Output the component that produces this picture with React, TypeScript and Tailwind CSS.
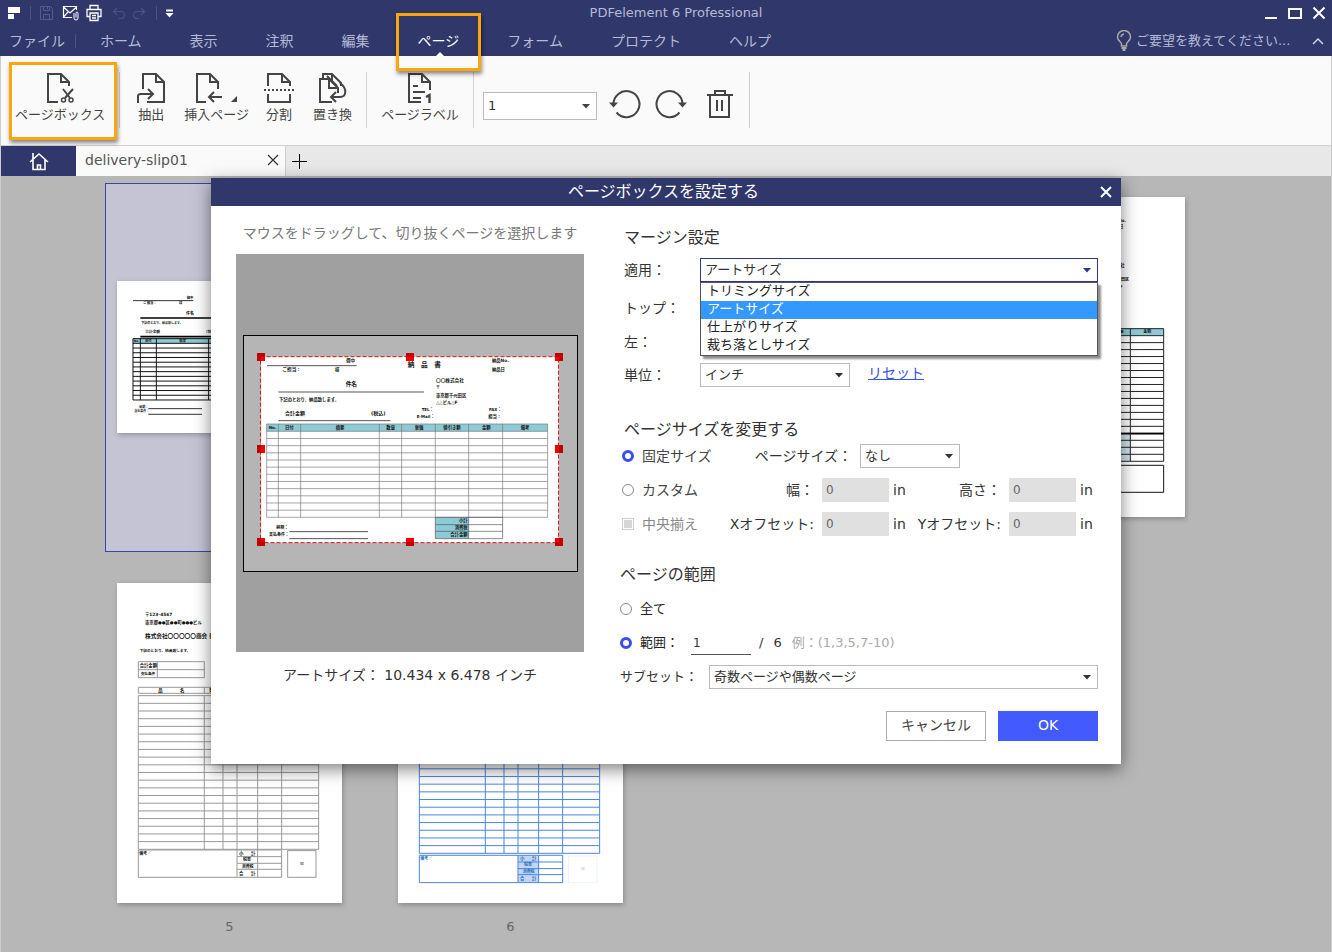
import { useState, type ReactNode } from "react";

const MENU = ["ホーム", "表示", "注釈", "編集", "ページ", "フォーム", "プロテクト", "ヘルプ"];
const BOX_TYPES = ["トリミングサイズ", "アートサイズ", "仕上がりサイズ", "裁ち落としサイズ"];

type Label = [number, number, string, number];

function range(from: number, to: number, count: number) {
  return Array.from({ length: count + 1 }, (_, i) => from + ((to - from) * i) / count);
}

function Grid({ xs, ys, stroke, width = 3 }: { xs: number[]; ys: number[]; stroke: string; width?: number }) {
  const d =
    xs.map((x) => `M${x} ${ys[0]}V${ys[ys.length - 1]}`).join("") +
    ys.map((y) => `M${xs[0]} ${y}H${xs[xs.length - 1]}`).join("");
  return <path d={d} stroke={stroke} strokeWidth={width} fill="none" />;
}

function Labels({ items, fill = "#111" }: { items: Label[]; fill?: string }) {
  return (
    <g fill={fill} fontWeight="bold">
      {items.map(([x, y, text, size], i) => (
        <text key={i} x={x} y={y} fontSize={size} xmlSpace="preserve">{text}</text>
      ))}
    </g>
  );
}

/* ---------- page drawings ---------- */

function SlipThumb() {
  return (
    <svg width="225" height="152" className="block">
      <g transform="translate(-17 -105) scale(0.3333)">
        <path d="M99 374H280M145 698H306M145 715H306" stroke="#333" strokeWidth="3" />
        <path d="M121 426H480M121 482H420" stroke="#000" strokeWidth="5" />
        <rect x="99" y="488" width="560" height="14" fill="#8ccad6" />
        <Grid xs={[99, 121, 169, 326, 380, 430, 659]} ys={[488, ...range(502, 672, 12)]} stroke="#111" />
        <Labels
          items={[
            [260, 369, "御中", 10], [130, 384, "ご担当：", 10], [237, 384, "様", 10],
            [258, 416, "件名", 12], [124, 444, "下記のとおり、納品致します。", 9],
            [136, 472, "合計金額", 11], [312, 472, "（税込）", 11],
            [101, 499, "No.", 9], [135, 499, "日付", 10], [238, 499, "摘要", 10],
            [118, 695, "納期：", 9], [103, 709, "支払条件：", 9],
          ]}
        />
      </g>
    </svg>
  );
}

function InvoiceThumb() {
  return (
    <svg width="225" height="320" className="block">
      <g transform="translate(140 -21) scale(0.3333)">
        <rect x="-360" y="458" width="551" height="20" fill="#8ccad6" />
        <rect x="-60" y="773" width="151" height="84" fill="#cfe3ec" />
        <Grid xs={[-360, -180, -60, 91, 191]} ys={[458, ...range(479, 772, 14), 793, 814, 835, 856]} stroke="#222" />
        <path d="M-360 773H192" stroke="#000" strokeWidth="5" />
        <path d="M-360 868H191V949H-360Z" stroke="#111" strokeWidth="3" fill="none" />
        <Labels
          items={[
            [28, 137, "納品No.", 13], [31, 157, "納品日", 13], [22, 274, "〇〇会社", 13],
            [3, 315, "東京都千代田区", 12], [30, 336, "ビル△F", 11], [48, 471, "単価", 11], [130, 471, "金額", 12],
          ]}
        />
        <text x="28" y="827" fontSize="12" fill="#1b5fb5">消費税</text>
      </g>
    </svg>
  );
}

function OrderThumb({ line, ink, shift = 0, tint }: { line: string; ink: string; shift?: number; tint?: string }) {
  const rows = range(377 + shift, 838 + shift, 20);
  const foot = 840 + (shift ? shift + 4 : 0);
  const head: Label[] = [
    [135, 137, "〒123-4567", 13], [135, 162, "東京都●●区●●町●●●ビル", 13],
    [135, 205, "株式会社〇〇〇〇〇商会 御中", 17], [119, 247, "下記のとおり、納品致します。", 11],
    [119, 291, "合計金額", 13], [122, 315, "支払条件", 11],
    [175, 367, "品", 13], [240, 367, "名", 13], [328, 367, "数量", 12],
  ];
  return (
    <svg width="225" height="320" className="block">
      <g transform="translate(-17 -13) scale(0.3333)">
        {tint && <rect x="411" y={foot} width="62" height="82" fill={tint} />}
        <Grid xs={[115, 172, 313]} ys={[275, 299, 323]} stroke={line} />
        <Grid xs={[115, 313, 369, 411, 473, 545, 656]} ys={[352 + shift, 370 + shift]} stroke={line} />
        <Grid xs={[115, 313, 369, 411, 473, 545, 656]} ys={rows} stroke={line} />
        <path d={`M411 ${foot}H115V${foot + 82}H411`} stroke={line} strokeWidth="3" fill="none" />
        <Grid xs={[411, 473, 545]} ys={[foot, foot + 20, foot + 40, foot + 58, foot + 82]} stroke={line} />
        <rect x="563" y={foot + 2} width="85" height="80" fill="none" stroke={tint ? "#edf3fb" : "#999"} strokeWidth="3" />
        <text x="600" y={foot + 45} fontSize="11" fontWeight="bold" fill={tint ? "#bcd4ee" : "#666"}>印</text>
        {!tint && <Labels fill={ink} items={head} />}
        <Labels
          fill={ink}
          items={[
            [118, foot + 14, "備考／", 12],
            [417, foot + 15, "小", 13], [453, foot + 15, "計", 13], [429, foot + 33, "税率", 12],
            [425, foot + 53, "消費税", 12], [417, foot + 75, "合", 13], [453, foot + 75, "計", 13],
          ]}
        />
      </g>
    </svg>
  );
}

function CropPreview() {
  const handles = [75, 522, 969].flatMap((x) => [96, 372, 651].map((y) => [x, y])).filter(([x, y]) => x !== 522 || y !== 372);
  return (
    <svg width="335" height="237" className="block">
      <rect x="0.5" y="0.5" width="334" height="236" fill="#b5b5b5" stroke="#000" />
      <g transform="translate(-7 -10) scale(0.3333)">
        <rect x="75" y="95" width="893" height="558" fill="#fff" />
        <path d="M93 122H362M127 201H564M127 287H463M160 620H396M160 641H396" stroke="#555" strokeWidth="3" />
        <rect x="92" y="297" width="843" height="22" fill="#8ccad6" />
        <rect x="598" y="578" width="100" height="63" fill="#8ccad6" />
        <Grid xs={[92, 127, 194, 430, 497, 598, 698, 800, 935]} ys={[297, ...range(319, 577, 12)]} stroke="#777" width={2} />
        <Grid xs={[598, 698, 800]} ys={[577, 599, 619, 641]} stroke="#555" width={2} />
        <Labels
          items={[
            [331, 111, "御中", 13], [139, 137, "ご担当：", 14], [297, 137, "様", 13],
            [515, 125, "納　品　書", 20], [768, 111, "納品No.", 13], [768, 137, "納品日", 13],
            [329, 184, "件名", 17], [600, 172, "〇〇株式会社", 14], [600, 192, "〒", 12],
            [600, 215, "東京都千代田区", 13], [600, 236, "△△ビル△F", 13],
            [129, 227, "下記のとおり、納品致します。", 13], [147, 270, "合計金額", 15], [405, 270, "(税込)", 15],
            [557, 259, "TEL：", 12], [542, 279, "E-Mail：", 12], [759, 259, "FAX：", 12], [757, 279, "担当：", 13],
            [98, 312, "No.", 12], [147, 312, "日付", 13], [299, 312, "摘要", 13], [451, 312, "数量", 13],
            [536, 312, "単価", 13], [622, 312, "値引き額", 13], [738, 312, "金額", 13], [854, 312, "備考", 13],
            [121, 613, "納期：", 12], [99, 634, "支払条件：", 12],
            [669, 592, "小計", 13], [656, 613, "消費税", 13], [643, 634, "合計金額", 13],
          ]}
        />
        <rect x="73.5" y="95" width="894" height="558" fill="none" stroke="#e0101a" strokeWidth="3" strokeDasharray="12 6" />
        {handles.map(([x, y]) => (
          <g key={`${x}-${y}`}>
            <rect x={x - 12} y={y - 12} width="24" height="24" fill="#c00000" />
            <rect
              x={x < 100 ? x : x - 12}
              y={y < 100 ? y : y - 12}
              width={x === 522 ? 24 : 12}
              height={y === 372 ? 24 : 12}
              fill="#f50000"
            />
          </g>
        ))}
      </g>
    </svg>
  );
}

/* ---------- icons ---------- */

function Icon({ w, h, sw = 2, children }: { w: number; h: number; sw?: number; children: ReactNode }) {
  return (
    <svg width={w} height={h} viewBox={`0 0 ${w} ${h}`} fill="none" stroke="currentColor" strokeWidth={sw} className="block shrink-0">
      {children}
    </svg>
  );
}

const CropIcon = () => (
  <Icon w={28} h={32}>
    <path d="M12 30H2V2H15L23 10V14M15 2V10H23" />
    <path d="M17 17L24 26M27 17L19 26" />
    <circle cx="17.500" cy="28" r="2" strokeWidth="1.5" />
    <circle cx="25" cy="28" r="2" strokeWidth="1.5" />
  </Icon>
);

const ExtractIcon = () => (
  <Icon w={30} h={32}>
    <path d="M7 17V2H20L28 10V30H11M20 2V10H28" />
    <path d="M2 31V24Q2 22 5 22H17M12 17L17 22L12 27" />
  </Icon>
);

const InsertIcon = () => (
  <Icon w={28} h={32}>
    <path d="M11 30H2V2H15L23 10V17M15 2V10H23" />
    <path d="M27 25H14M19 20L14 25L19 30" />
  </Icon>
);

const SplitIcon = () => (
  <Icon w={32} h={32}>
    <path d="M5 14V2H19L27 10V14M19 2V10H27M5 22V30H27V22" />
    <path d="M1 18H31" strokeDasharray="2 2" />
  </Icon>
);

const ReplaceIcon = () => (
  <Icon w={30} h={32}>
    <path d="M14 30H2V7H11L20 16V21M11 7V16H20" />
    <path d="M5 7V2H14L23 11V14M14 2V10M9 4L19 14" />
    <path d="M22 11C30 17 28 25 22 25H14M18 20L13 25L18 30" />
  </Icon>
);

const LabelIcon = () => (
  <Icon w={26} h={32}>
    <path d="M14 30H2V2H15L23 10V18M15 2V10H23M6 14H11M6 20H18M6 26H14" />
    <path d="M19 25L22.500 23V31" strokeWidth="2.4" />
  </Icon>
);

function Rotate({ flip }: { flip?: boolean }) {
  return (
    <Icon w={32} h={32}>
      <g transform={flip ? "translate(32 0) scale(-1 1)" : undefined}>
        <path d="M4.500 17A13 13 0 1 1 7.500 24.500" />
        <path d="M0 14.500H9L4.500 19.500Z" fill="currentColor" stroke="none" />
      </g>
    </Icon>
  );
}

function DownArrow() {
  return (
    <svg width="8" height="5" className="pointer-events-none absolute right-1.5 top-1/2 -mt-0.5">
      <path d="M0 0H8L4 4.500Z" fill="currentColor" />
    </svg>
  );
}

/* ---------- small parts ---------- */

type PickerProps = {
  id: string;
  label?: string;
  options: string[];
  value?: string;
  onChange?: (v: string) => void;
  className: string;
};

function Picker({ id, label, options, value, onChange, className }: PickerProps) {
  return (
    <div className={`relative border bg-white ${className}`}>
      <select
        id={id}
        aria-label={label}
        value={value}
        onChange={(e) => onChange?.(e.target.value)}
        className="block h-full w-full appearance-none bg-transparent pl-1 pr-5 text-[13px] text-[#333] outline-none"
      >
        {options.map((o) => (
          <option key={o}>{o}</option>
        ))}
      </select>
      <DownArrow />
    </div>
  );
}

function RibbonButton({ icon, label, children }: { icon: ReactNode; label: string; children?: ReactNode }) {
  return (
    <button type="button" className="relative flex flex-col items-center whitespace-nowrap text-[13px] leading-5 text-[#444]">
      {icon}
      <span className="mt-px">{label}</span>
      {children}
    </button>
  );
}

function Radio({ name, label, checked, onChange, dark }: { name: string; label: string; checked: boolean; onChange: () => void; dark?: boolean }) {
  return (
    <label className={`flex items-center gap-2 whitespace-nowrap ${dark ? "text-[13px] text-[#222]" : "w-25 text-sm text-[#444]"}`}>
      <input
        type="radio"
        name={name}
        checked={checked}
        onChange={onChange}
        className="size-3 shrink-0 appearance-none rounded-full border border-[#888] bg-white checked:border-3 checked:border-[#3a50ea]"
      />
      {label}
    </label>
  );
}

function SizeField({ id, label }: { id: string; label: string }) {
  return (
    <div className="flex items-center">
      <label htmlFor={id} className="mr-2 w-23 whitespace-nowrap text-right">{label}</label>
      <input id={id} disabled defaultValue="0" className="h-6 w-[67px] bg-[#e0e0e0] px-1 text-xs text-[#666]" />
      <span className="ml-1 w-4">in</span>
    </div>
  );
}

const Separator = () => <div className="h-14 w-px bg-[#d0d0d0]" />;
const MARK = "pointer-events-none absolute z-20 border-3 border-[#fba70c] shadow-[1px_3px_4px_rgba(0,0,0,0.45)]";

function Thumb({ n, selected, children }: { n: number; selected?: boolean; children?: ReactNode }) {
  return (
    <figure
      className={`flex h-[369px] flex-col items-center border pt-[13px] ${selected ? "border-[#3c44a4] bg-[#c4c4d4]" : "border-transparent"}`}
    >
      <div className="flex h-80 items-center">
        <div className="w-[225px] bg-white shadow-[1px_2px_5px_rgba(0,0,0,0.25)]">{children ?? <div className="h-80" />}</div>
      </div>
      <figcaption className="mt-3.5 text-[13px] leading-5 text-[#666]">{n}</figcaption>
    </figure>
  );
}

/* ---------- window parts ---------- */

function TitleBar() {
  return (
    <div className="flex h-[26px] items-center">
      <div className="flex flex-1 items-center pl-2">
        <svg width="12" height="14" fill="#fff" className="block"><path d="M0 1H12V7H0ZM0 8H6V13H0Z" /></svg>
        <div className="ml-2.5 h-3.5 w-px bg-[#4a5288]" />
        <button type="button" aria-label="保存" className="ml-2 text-[#525a92]">
          <Icon w={15} h={16} sw={1}><path d="M1.500 1.500H11.500L13.500 3.500V14.500H1.500ZM4.500 1.500V5.500H10.500V1.500M4.500 14.500V9.500H10.500V14.500M8.500 2V4" /></Icon>
        </button>
        <button type="button" aria-label="メール" className="ml-2 text-white">
          <Icon w={18} h={16} sw={1.2}>
            <path d="M10 12.500H1.500V1.500H14.500V5M1.500 2L8 8L14.500 2M1.500 12L6 7" />
            <path d="M12 8V13Q12 15 14 15T16 13V8.500Q16 7 15 7T14 8.500V12.500" strokeWidth="1" />
          </Icon>
        </button>
        <button type="button" aria-label="印刷" className="ml-1.5 text-white">
          <Icon w={16} h={18} sw={1.3}>
            <path d="M4 5.500V1.500H12V5.500M3.500 12.500H1V5.500H15V12.500H12.500M4 9H12V16.500H4ZM6 11.500H10M6 14H10" />
          </Icon>
        </button>
        <button type="button" aria-label="元に戻す" className="ml-2.5 text-[#4a5288]">
          <Icon w={14} h={14} sw={1.2}><path d="M5 2L1.500 5.500L5 9M1.500 5.500H9A3.500 3.500 0 0 1 9 12.500H7" /></Icon>
        </button>
        <button type="button" aria-label="やり直し" className="ml-1.5 text-[#4a5288]">
          <Icon w={14} h={14} sw={1.2}><path d="M9 2L12.500 5.500L9 9M12.500 5.500H5A3.500 3.500 0 0 0 5 12.500H7" /></Icon>
        </button>
        <div className="ml-2.5 h-3.5 w-px bg-[#4a5288]" />
        <button type="button" aria-label="カスタマイズ" className="ml-2 text-white">
          <Icon w={9} h={9}><path d="M1 1.500H8" /><path d="M0.500 4H8.500L4.500 8.500Z" fill="currentColor" stroke="none" /></Icon>
        </button>
      </div>
      <div className="pl-[18px] text-[13px] leading-6 text-[#b5bad6]">PDFelement 6 Professional</div>
      <div className="flex flex-1 items-center justify-end gap-2.5 pr-1.5 text-white">
        <button type="button" aria-label="最小化"><Icon w={14} h={14}><path d="M1 12H13" /></Icon></button>
        <button type="button" aria-label="最大化"><Icon w={14} h={14}><path d="M1 3H13V12H1Z" /></Icon></button>
        <button type="button" aria-label="閉じる"><Icon w={14} h={14}><path d="M1.500 1.500L12.500 12.500M12.500 1.500L1.500 12.500" /></Icon></button>
      </div>
    </div>
  );
}

function MenuBar() {
  return (
    <nav className="flex h-[30px] items-stretch text-sm text-[#b5bad6]">
      <div className="flex items-center">
        <button type="button" className="pl-[9px] pr-2.5">ファイル</button>
        <div className="h-3.5 w-px bg-[#4a5288]" />
      </div>
      {MENU.map((item) => (
        <button key={item} type="button" className={`relative whitespace-nowrap px-6 ${item === "ページ" ? "text-white" : ""}`}>
          {item}
          {item === "ページ" && (
            <>
              <svg width="8" height="4" className="absolute bottom-0 left-1/2 -ml-0.5"><path d="M0 4L4 0L8 4Z" fill="#fafafa" /></svg>
              <span className={`-bottom-[15px] -top-[13px] inset-x-0.5 ${MARK}`} />
            </>
          )}
        </button>
      ))}
      <div className="ml-auto flex items-center pr-2">
        <svg width="16" height="22" fill="none" stroke="#aaaaa0" strokeWidth="1.500">
          <path d="M5.500 16V14C5.500 12 1.500 11 1.500 7A6.500 6.500 0 0 1 14.500 7C14.500 11 10.500 12 10.500 14V16ZM5 7A3.500 3.500 0 0 1 8 4" />
          <path d="M5.500 18H10.500M6.500 20H9.500" strokeWidth="2" />
        </svg>
        <input
          aria-label="ご要望"
          placeholder="ご要望を教えてください..."
          className="ml-1 w-43 bg-transparent text-[13px] outline-none placeholder:text-[#b5bad6] placeholder:opacity-100"
        />
        <button type="button" aria-label="リボンを隠す" className="ml-1 text-[#d8dbea]">
          <Icon w={12} h={8} sw={1.4}><path d="M1 7L6 2L11 7" /></Icon>
        </button>
      </div>
    </nav>
  );
}

function Ribbon() {
  return (
    <div className="flex h-[89px] items-start bg-[#fafafa] pt-4 text-[#444]">
      <div className="px-3.5">
        <RibbonButton icon={<CropIcon />} label="ページボックス">
          <span className={`-left-1.5 -right-3 -top-2.5 -bottom-[15px] ${MARK}`} />
        </RibbonButton>
      </div>
      <Separator />
      <div className="flex gap-[18px] pl-4 pr-3.5">
        <RibbonButton icon={<ExtractIcon />} label="抽出" />
        <RibbonButton icon={<div className="pr-4"><InsertIcon /></div>} label="挿入ページ">
          <svg width="6" height="6" className="absolute right-3 top-6"><path d="M6 0V6H0Z" fill="currentColor" /></svg>
        </RibbonButton>
        <div className="-ml-1">
          <RibbonButton icon={<SplitIcon />} label="分割" />
        </div>
        <RibbonButton icon={<ReplaceIcon />} label="置き換" />
      </div>
      <Separator />
      <div className="px-3.5">
        <RibbonButton icon={<LabelIcon />} label="ページラベル" />
      </div>
      <Separator />
      <div className="flex h-16 items-center pl-[9px] pr-4">
        <Picker id="page" label="ページ番号" options={["1", "2", "3", "4", "5", "6"]} className="mt-1 h-7 w-[114px] border-[#bbb]" />
        <button type="button" aria-label="左に回転" className="ml-3"><Rotate /></button>
        <button type="button" aria-label="右に回転" className="ml-3.5"><Rotate flip /></button>
        <button type="button" aria-label="削除" className="ml-5">
          <Icon w={26} h={30}><path d="M0 6H26M8 6V2H18V6M3 6V28H22V6M10 11V22M15 11V22" /></Icon>
        </button>
      </div>
      <Separator />
    </div>
  );
}

function TabBar() {
  return (
    <div className="flex h-[31px] border-t border-[#d0d0d0] bg-[#e8e8e8]">
      <button type="button" aria-label="ホーム画面" className="flex w-[75px] items-center justify-center bg-[#2f376b] text-white">
        <Icon w={20} h={20} sw={1.6}><path d="M1 11L10 3L19 11M4 9V18.500H16V9M4 8V2M8.500 18V14H11.500V18" /></Icon>
      </button>
      <div className="flex w-[210px] items-center justify-between border-r border-[#ccc] bg-[#fafafa] pb-0.5 pl-[9px] pr-1.5 text-sm text-[#555]">
        delivery-slip01
        <button type="button" aria-label="タブを閉じる" className="text-[#333]">
          <Icon w={12} h={12} sw={1.2}><path d="M1 1L11 11M11 1L1 11" /></Icon>
        </button>
      </div>
      <button type="button" aria-label="新しいタブ" className="px-1.5 text-black">
        <Icon w={15} h={15} sw={1}><path d="M7.500 0V15M0 7.500H15" /></Icon>
      </button>
    </div>
  );
}

function PageBoxDialog() {
  const [box, setBox] = useState("アートサイズ");
  const [unit, setUnit] = useState("インチ");
  const [sizeMode, setSizeMode] = useState("fixed");
  const [scope, setScope] = useState("range");

  return (
    <section role="dialog" aria-label="ページボックスを設定する" className="w-[910px] bg-white shadow-[0_5px_16px_rgba(0,0,0,0.5)]">
      <header className="flex h-7 items-center bg-[#2f376b] pr-[9px] text-white">
        <h1 className="flex-1 pl-4 text-center text-base leading-7">ページボックスを設定する</h1>
        <button type="button" aria-label="閉じる">
          <Icon w={12} h={12}><path d="M1 1L11 11M11 1L1 11" /></Icon>
        </button>
      </header>

      <div className="flex justify-between pb-[23px] pl-[25px] pr-[23px] pt-4 text-sm text-[#333]">
        {/* Preview */}
        <div className="w-[348px] text-center">
          <p className="h-8 leading-[22px] text-[#777]">マウスをドラッグして、切り抜くページを選択します</p>
          <div className="flex h-[398px] items-center justify-center bg-[#a0a0a0] pt-px">
            <CropPreview />
          </div>
          <p className="mt-[11px] leading-6">アートサイズ： 10.434 x 6.478 インチ</p>
        </div>

        <form className="w-[478px] pt-1" onSubmit={(e) => e.preventDefault()}>
          {/* Margins */}
          <div className="pl-1">
            <h2 className="text-base leading-6">マージン設定</h2>
            <div className="mt-2 flex items-center">
              <label htmlFor="box" className="w-19">適用：</label>
              <div className="relative flex-1">
                <Picker id="box" options={BOX_TYPES} value={box} onChange={setBox} className="h-6 border-[#2e3590] text-[#2e3590]" />
                <ul role="listbox" aria-label="適用" className="absolute inset-x-0 top-full z-10 border border-[#555] bg-white text-[13px] leading-4 shadow-[3px_3px_2px_rgba(0,0,0,0.45)]">
                  {BOX_TYPES.map((b) => (
                    <li
                      key={b}
                      role="option"
                      aria-selected={b === box}
                      onClick={() => setBox(b)}
                      className={`h-[18px] px-1.5 ${b === box ? "bg-[#3399ff] text-white" : "text-[#222]"}`}
                    >
                      {b}
                    </li>
                  ))}
                </ul>
              </div>
            </div>
            <div className="mt-3.5 leading-6">トップ：</div>
            <div className="mt-2.5 leading-6">左：</div>
            <div className="mt-[9px] flex items-center">
              <label htmlFor="unit" className="w-19">単位：</label>
              <Picker id="unit" options={["インチ", "センチ"]} value={unit} onChange={setUnit} className="h-6 w-[150px] border-[#bbb]" />
              <a href="#reset" className="mb-1 ml-[18px] text-[#3a50ea] underline">リセット</a>
            </div>
          </div>

          {/* Page size */}
          <h2 className="mt-[31px] pl-1 text-base leading-6">ページサイズを変更する</h2>
          <div className="mt-0.5 flex flex-col gap-2.5 pl-0.5">
            <div className="flex items-center">
              <Radio name="size" label="固定サイズ" checked={sizeMode === "fixed"} onChange={() => setSizeMode("fixed")} />
              <label htmlFor="preset" className="mr-2 w-[130px] text-right">ページサイズ：</label>
              <Picker id="preset" options={["なし"]} className="h-6 w-[100px] border-[#bbb]" />
            </div>
            <div className="flex items-center">
              <Radio name="size" label="カスタム" checked={sizeMode === "custom"} onChange={() => setSizeMode("custom")} />
              <SizeField id="w" label="幅：" />
              <SizeField id="h" label="高さ：" />
            </div>
            <div className="flex items-center">
              <label className="flex w-25 items-center gap-2 text-[#888]">
                <input type="checkbox" disabled className="size-3 appearance-none border border-[#ccc] bg-[#d6d6d6] shadow-[inset_0_0_0_1px_#fff]" />
                中央揃え
              </label>
              <SizeField id="x" label="Xオフセット:" />
              <SizeField id="y" label="Yオフセット:" />
            </div>
          </div>

          {/* Page range */}
          <h2 className="mt-[27px] text-base leading-6">ページの範囲</h2>
          <div className="mt-2.5 flex flex-col gap-2.5 text-[13px]">
            <div className="flex h-6 items-center">
              <Radio dark name="scope" label="全て" checked={scope === "all"} onChange={() => setScope("all")} />
            </div>
            <div className="flex h-6 items-center">
              <Radio dark name="scope" label="範囲：" checked={scope === "range"} onChange={() => setScope("range")} />
              <input aria-label="範囲" defaultValue="1" className="ml-3 h-6 w-15 border-b border-[#555] px-0.5 text-xs outline-none" />
              <span className="ml-2">/</span>
              <span className="ml-2.5">6</span>
              <span className="ml-2.5 text-[#aaa]">例：(1,3,5,7-10)</span>
            </div>
            <div className="flex items-center">
              <label htmlFor="subset" className="w-[89px]">サブセット：</label>
              <Picker id="subset" options={["奇数ページや偶数ページ", "奇数ページ", "偶数ページ"]} className="h-6 flex-1 border-[#bbb]" />
            </div>
          </div>

          <div className="mt-[22px] flex justify-end gap-3">
            <button type="button" className="h-[30px] w-25 border border-[#aaa] bg-white pb-0.5 text-[#444]">キャンセル</button>
            <button type="submit" className="h-[30px] w-25 bg-[#425aff] pb-0.5 text-white">OK</button>
          </div>
        </form>
      </div>
    </section>
  );
}

export default function App() {
  return (
    <div className="flex min-h-screen flex-col bg-[#b7b7b7] font-['DejaVu_Sans','Noto_Sans_CJK_JP',sans-serif]">
      <header className="bg-[#2f376b]">
        <TitleBar />
        <MenuBar />
      </header>
      <div className="flex flex-1 flex-col border-x border-[#ccc]">
        <Ribbon />
        <TabBar />
        <main className="relative flex-1">
          <div className="grid grid-cols-[repeat(auto-fill,249px)] gap-x-8 gap-y-[17px] px-26 pt-[7px]">
            <Thumb n={1} selected><SlipThumb /></Thumb>
            <Thumb n={2} />
            <Thumb n={3} />
            <Thumb n={4}><InvoiceThumb /></Thumb>
            <Thumb n={5}><OrderThumb line="#999" ink="#111" /></Thumb>
            <Thumb n={6}><OrderThumb line="#4a86dc" ink="#1a6fc4" shift={12} tint="#c3d5f2" /></Thumb>
          </div>
          <div className="absolute inset-x-0 top-0.5 z-10 flex justify-center">
            <PageBoxDialog />
          </div>
        </main>
      </div>
    </div>
  );
}
